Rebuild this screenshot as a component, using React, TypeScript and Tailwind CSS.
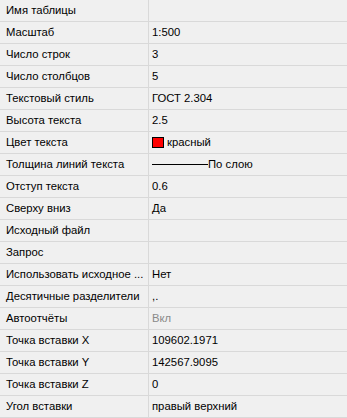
import React from "react";

interface Row {
    label: string;
    value?: React.ReactNode;
    muted?: boolean;
}

const rows: Row[] = [
    { label: "Имя таблицы" },
    { label: "Масштаб", value: "1:500" },
    { label: "Число строк", value: "3" },
    { label: "Число столбцов", value: "5" },
    { label: "Текстовый стиль", value: "ГОСТ 2.304" },
    { label: "Высота текста", value: "2.5" },
    {
        label: "Цвет текста",
        value: (
            <span className="flex items-center gap-[3px]">
                <span className="inline-block w-[12px] h-[11px] bg-[#ff0000] border border-black" />
                красный
            </span>
        ),
    },
    {
        label: "Толщина линий текста",
        value: (
            <span className="flex items-center">
                <span className="inline-block w-[56px] h-px bg-black" />
                По слою
            </span>
        ),
    },
    { label: "Отступ текста", value: "0.6" },
    { label: "Сверху вниз", value: "Да" },
    { label: "Исходный файл" },
    { label: "Запрос" },
    { label: "Использовать исходное ...", value: "Нет" },
    { label: "Десятичные разделители", value: ",." },
    { label: "Автоотчёты", value: "Вкл", muted: true },
    { label: "Точка вставки X", value: "109602.1971" },
    { label: "Точка вставки Y", value: "142567.9095" },
    { label: "Точка вставки Z", value: "0" },
    { label: "Угол вставки", value: "правый верхний" },
];

const App: React.FC = () => {
    return (
        <div className="w-[347px] h-[418px] overflow-hidden bg-[#f0f0f0] text-[11.3px] text-black font-['Liberation_Sans',Arial,sans-serif]">
            {rows.map((row, index) => (
                <div key={index} className="flex h-[22px] border-b border-[#d9d9d9]">
                    <div className="w-[149px] shrink-0 flex items-center pl-[6px] border-r border-[#d9d9d9] whitespace-nowrap">
                        {row.label}
                    </div>
                    <div
                        className={`flex-1 flex items-center pl-[3px] whitespace-nowrap ${
                            row.muted ? "text-[#8a8a8a]" : ""
                        }`}
                    >
                        {row.value}
                    </div>
                </div>
            ))}
        </div>
    );
};

export default App;
